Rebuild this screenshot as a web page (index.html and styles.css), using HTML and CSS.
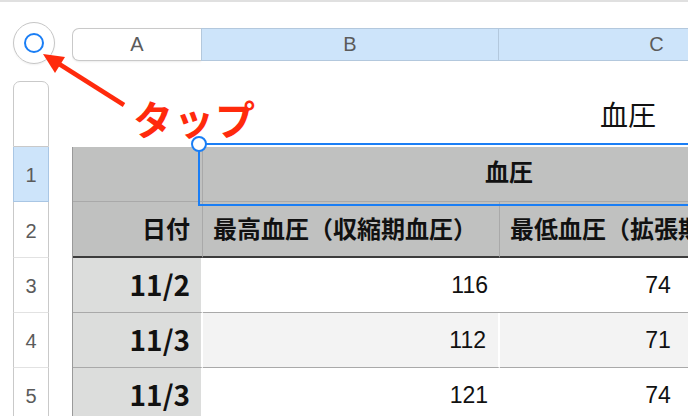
FILE: index.html
```html
<!DOCTYPE html>
<html lang="ja">
<head>
  <meta charset="UTF-8" />
  <title>血圧</title>
  <link rel="stylesheet" href="styles.css">
</head>
<body>
  <div class="topline"></div>
  <div class="sheet">
    <div class="gutter">
      <div class="select-all"><span class="dot"></span></div>
      <div class="rowheads">
        <div class="rh rh-top"></div>
        <div class="rh rh-sel h55">1</div>
        <div class="rh h56">2</div>
        <div class="rh h55">3</div>
        <div class="rh h55">4</div>
        <div class="rh h55">5</div>
      </div>
    </div>

    <div class="main">
      <div class="colheads">
        <div class="ch ch-a">A</div>
        <div class="ch ch-sel">B</div>
        <div class="ch ch-sel ch-c">C</div>
      </div>
      <div class="title">血圧</div>

      <div class="grid">
        <div class="row hrow h55">
          <div class="cell hcell"></div>
          <div class="cell hcell span2">血圧</div>
        </div>
        <div class="row hrow h56 last-head">
          <div class="cell hcell right">日付</div>
          <div class="cell hcell left">最高血圧（収縮期血圧）</div>
          <div class="cell hcell left">最低血圧（拡張期血圧）</div>
        </div>
        <div class="row h55">
          <div class="cell date">11/2</div>
          <div class="cell num right">116</div>
          <div class="cell num center">74</div>
        </div>
        <div class="row h55 alt">
          <div class="cell date">11/3</div>
          <div class="cell num right">112</div>
          <div class="cell num center">71</div>
        </div>
        <div class="row h55">
          <div class="cell date">11/3</div>
          <div class="cell num right">121</div>
          <div class="cell num center">74</div>
        </div>

        <div class="selection"><span class="handle"></span></div>
      </div>
    </div>
  </div>

  <!-- annotation -->
  <svg class="arrow" width="688" height="416" viewBox="0 0 688 416">
    <line x1="124" y1="105" x2="56" y2="62" stroke="#ff2a0c" stroke-width="4.5" />
    <polygon points="43,54 65,57 55,73" fill="#ff2a0c" />
  </svg>
  <div class="tap">タップ</div>
</body>
</html>
```

FILE: styles.css
```css
html, body { margin: 0; padding: 0; }
body { width: 688px; height: 416px; overflow: hidden; background: #fff; position: relative; font-family: "Liberation Sans", "Noto Sans CJK JP", sans-serif; }
.topline { height: 2px; background: #e0e0e0; }

.sheet { display: flex; }
.gutter { width: 72px; flex: none; padding-left: 13px; box-sizing: border-box; }
.select-all { width: 42px; height: 42px; margin-top: 20px; border: 1px solid #c6c6c6; border-radius: 50%; box-sizing: border-box; display: flex; align-items: center; justify-content: center; box-shadow: 0 1px 2px rgba(0,0,0,0.06); }
.dot { width: 20px; height: 20px; border: 2px solid #1a7ef5; border-radius: 50%; box-sizing: border-box; }

.rowheads { width: 36px; margin-top: 17px; }
.rh { box-sizing: border-box; border-left: 1px solid #c9c9c9; border-right: 1px solid #c9c9c9; border-bottom: 1px solid #e2e2e2; display: flex; align-items: center; justify-content: center; color: #5b5b5b; font-size: 20px; padding-top: 3px; }
.rh-top { height: 66px; border-top: 1px solid #c9c9c9; border-radius: 7px 7px 0 0; border-bottom-color: #c9c9c9; }
.rh-sel { background: #cde4fa; border-color: #a9c6e4; }
.h55 { height: 55px; }
.h56 { height: 56px; }

.main { flex: 1; min-width: 0; overflow: hidden; }
.colheads { display: flex; margin-top: 26px; height: 33px; }
.ch { box-sizing: border-box; display: flex; align-items: center; justify-content: center; color: #5b5b5b; font-size: 20px; border-top: 1px solid #c9c9c9; border-bottom: 1px solid #c9c9c9; flex: none; }
.ch-a { width: 129px; background: #fff; border-left: 1px solid #c9c9c9; border-radius: 7px 0 0 7px; box-shadow: 0 1px 2px rgba(0,0,0,0.08); }
.ch-sel { width: 297px; background: #cde4fa; border-color: #b3c8dd; border-left: 1px solid #b3c8dd; }
.ch-c { width: 316px; }

.title { height: 86px; box-sizing: border-box; padding: 37px 0 0 528px; font-family: "Noto Sans CJK JP", sans-serif; font-size: 28px; line-height: 32px; color: #111; }

.grid { position: relative; width: 744px; border-left: 1px solid #9a9a9a; }
.row { display: grid; grid-template-columns: 130px 297px 316px; box-sizing: border-box; }
.cell { box-sizing: border-box; display: flex; align-items: center; padding: 0 12px; border-bottom: 1px solid #a9a9a9; }
.hrow .cell { background: #c0c1c0; font-family: "Noto Sans CJK JP", sans-serif; font-weight: 700; font-size: 24px; color: #111; border-right: 1px solid #a9a9a9; padding-bottom: 4px; }
.hcell.span2 { grid-column: 2 / 4; justify-content: center; padding-left: 0; padding-right: 0; padding-bottom: 8px; }
.last-head .cell { border-bottom: 2px solid #3c3c3c; }
.right { justify-content: flex-end; }
.left { justify-content: flex-start; padding-left: 10px; white-space: nowrap; }
.center { justify-content: center; }

.date { background: #dcdddc; border-right: 2px solid #fff; justify-content: flex-end; padding-right: 11px; padding-bottom: 3px; font-family: "Noto Sans CJK JP", sans-serif; font-weight: 700; font-size: 28px; color: #111; }
.num { font-size: 23px; color: #111; }
.alt .num { background: #f3f3f3; }
.alt .num.right { border-right: 2px solid #fff; }

.selection { position: absolute; left: 125px; top: -4px; width: 700px; height: 63px; border: 2px solid #1a7ef5; box-sizing: border-box; }
.handle { position: absolute; left: -9px; top: -9px; width: 12px; height: 12px; border: 2px solid #1a7ef5; border-radius: 50%; background: #fff; }

.arrow { position: absolute; left: 0; top: 0; pointer-events: none; }
.tap { position: absolute; left: 133px; top: 94px; font-family: "Noto Sans CJK JP", sans-serif; font-weight: 700; font-size: 40px; line-height: 48px; color: #ff2a0c; letter-spacing: 1px; }
```
